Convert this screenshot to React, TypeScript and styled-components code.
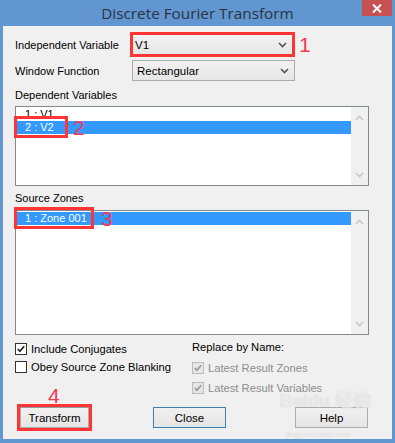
import React, { FC } from 'react'
import styled, { createGlobalStyle } from 'styled-components'

const GlobalStyle = createGlobalStyle`
  html, body {
    margin: 0;
    padding: 0;
    background: #ffffff;
  }
`

const Window = styled.div`
  position: relative;
  width: 395px;
  height: 443px;
  background: #6196d0;
  display: flex;
  flex-direction: column;
  font-family: 'Liberation Sans', Arial, sans-serif;
  font-size: 11px;
  color: #000;
  overflow: hidden;
`

const TitleBar = styled.div`
  height: 26px;
  flex: none;
  display: grid;
  grid-template-columns: 1fr auto 1fr;
  align-items: start;
`

const Title = styled.div`
  grid-column: 2;
  font-family: 'Open Sans', 'Noto Sans', sans-serif;
  font-size: 15.3px;
  line-height: 26px;
  color: #2b3340;
`

const CloseBox = styled.div`
  grid-column: 3;
  justify-self: end;
  margin-right: 3px;
  width: 30px;
  height: 16px;
  background: #c75050;
  display: flex;
  align-items: center;
  justify-content: center;
`

const Client = styled.div`
  flex: 1;
  margin: 0 3px 4px 3px;
  background: #f0f0f0;
  padding: 6px 12px 0 12px;
  display: flex;
  flex-direction: column;
`

const FieldRow = styled.div<{ $top?: number }>`
  display: flex;
  align-items: center;
  margin-top: ${({ $top }) => $top ?? 0}px;
  height: ${({ $top }) => ($top ? 21 : 25)}px;
`

const FieldLabel = styled.div`
  width: 115px;
  flex: none;
`

const Combo = styled.div<{ $marked?: boolean }>`
  box-sizing: border-box;
  width: ${({ $marked }) => ($marked ? 165 : 163)}px;
  height: ${({ $marked }) => ($marked ? 25 : 21)}px;
  margin-left: ${({ $marked }) => ($marked ? 0 : 2)}px;
  border: ${({ $marked }) => ($marked ? '3px solid #ff3434' : '1px solid #acacac')};
  background: linear-gradient(#f2f2f2, #e6e6e6);
  display: flex;
  align-items: center;
  justify-content: space-between;
  padding: 0 5px 0 ${({ $marked }) => ($marked ? 2 : 4)}px;
  font-size: 11.5px;
`

const Mark = styled.span`
  font-family: 'Liberation Sans', Arial, sans-serif;
  font-size: 21px;
  line-height: 1;
  color: #f23a52;
`

const SectionLabel = styled.div<{ $top: number }>`
  margin-top: ${({ $top }) => $top}px;
  line-height: 13px;
`

const ListBox = styled.div<{ $height: number; $top: number }>`
  box-sizing: border-box;
  margin-top: ${({ $top }) => $top}px;
  width: 354px;
  height: ${({ $height }) => $height}px;
  border: 1px solid #828790;
  background: #fff;
  display: flex;
`

const ListItems = styled.div`
  flex: 1;
  padding-top: 1px;
  display: flex;
  flex-direction: column;
`

const ListItem = styled.div<{ $selected?: boolean }>`
  position: relative;
  height: 13px;
  line-height: 13px;
  padding-left: 9px;
  background: ${({ $selected }) => ($selected ? '#3399ff' : 'transparent')};
  color: ${({ $selected }) => ($selected ? '#fff' : '#000')};
  font-size: 11px;
`

const ItemMark = styled.div<{ $w: number }>`
  position: absolute;
  left: -2px;
  top: -5px;
  width: ${({ $w }) => $w}px;
  height: 22px;
  box-sizing: border-box;
  border: 3px solid #ff3434;
`

const ItemNumber = styled(Mark)<{ $left: number }>`
  position: absolute;
  left: ${({ $left }) => $left}px;
  top: -4px;
`

const ScrollBar = styled.div`
  width: 17px;
  background: #f0f0f0;
  display: flex;
  flex-direction: column;
  justify-content: space-between;
  align-items: center;
  padding: 8px 0 7px;
  box-sizing: border-box;
`

const Options = styled.div`
  margin-top: 7px;
  display: grid;
  grid-template-columns: 177px 1fr;
`

const OptionColumn = styled.div<{ $gap: number }>`
  display: flex;
  flex-direction: column;
  gap: ${({ $gap }) => $gap}px;
`

const CheckRow = styled.label<{ $disabled?: boolean }>`
  display: flex;
  align-items: center;
  gap: 4px;
  height: 13px;
  font-size: 11.2px;
  color: ${({ $disabled }) => ($disabled ? '#8d8d8d' : '#000')};
`

const Box = styled.span<{ $disabled?: boolean }>`
  box-sizing: border-box;
  width: 12px;
  height: 12px;
  flex: none;
  border: 1px solid ${({ $disabled }) => ($disabled ? '#bcbcbc' : '#333')};
  background: ${({ $disabled }) => ($disabled ? '#e6e6e6' : '#fff')};
  display: flex;
  align-items: center;
  justify-content: center;
`

const PlainText = styled.div`
  height: 13px;
  line-height: 13px;
  font-size: 11.2px;
  margin-top: -1px;
`

const ButtonRow = styled.div`
  margin-top: 10px;
  display: flex;
  align-items: flex-end;
`

const MarkedButton = styled.div`
  position: relative;
  margin-left: 2px;
  box-sizing: border-box;
  width: 75px;
  height: 27px;
  border: 3px solid #ff3434;
  display: flex;
`

const FourMark = styled(Mark)`
  position: absolute;
  left: 28px;
  top: -22px;
`

const Button = styled.div<{ $primary?: boolean; $left: number }>`
  box-sizing: border-box;
  flex: ${({ $left }) => ($left < 0 ? 1 : 'none')};
  width: ${({ $left }) => ($left < 0 ? 'auto' : '73px')};
  height: ${({ $left }) => ($left < 0 ? 'auto' : '21px')};
  margin-left: ${({ $left }) => Math.max($left, 0)}px;
  margin-bottom: ${({ $left }) => ($left < 0 ? 0 : 3)}px;
  border: 1px solid ${({ $primary }) => ($primary ? '#3c7fb1' : '#acacac')};
  border-top-color: ${({ $left }) => ($left < 0 ? '#9a9a9a' : undefined)};
  background: linear-gradient(#f0f0f0, #e5e5e5);
  display: flex;
  align-items: center;
  justify-content: center;
  font-size: 11.5px;
`

const Watermark = styled.div`
  position: absolute;
  left: 280px;
  top: 392px;
  color: rgba(255, 255, 255, 0.6);
  text-shadow: 0 0 1px rgba(120, 120, 120, 0.35);
  font-family: 'Liberation Sans', Arial, 'Noto Sans CJK SC', sans-serif;
  font-weight: bold;
  pointer-events: none;
`

const WaterBig = styled.div`
  font-size: 18px;
  line-height: 19px;
`

const WaterSmall = styled.div`
  font-size: 8px;
  font-weight: normal;
  line-height: 9px;
  margin: 19px 0 0 6px;
`

const Chevron: FC<{ dir: 'up' | 'down'; color: string }> = ({ dir, color }) => (
  <svg width="9" height="6" viewBox="0 0 9 6">
    <path
      d={dir === 'down' ? 'M1 1 L4.5 4.5 L8 1' : 'M1 5 L4.5 1.5 L8 5'}
      fill="none"
      stroke={color}
      strokeWidth="1.6"
    />
  </svg>
)

const Tick: FC<{ color: string }> = ({ color }) => (
  <svg width="10" height="10" viewBox="0 0 11 11">
    <path d="M2 5.5 L4.3 8 L9 2.5" fill="none" stroke={color} strokeWidth="1.9" />
  </svg>
)

const Check: FC<{ label: string; checked?: boolean; disabled?: boolean }> = ({
  label,
  checked,
  disabled,
}) => (
  <CheckRow $disabled={disabled}>
    <Box $disabled={disabled}>{checked && <Tick color={disabled ? '#9a9a9a' : '#222'} />}</Box>
    {label}
  </CheckRow>
)

const Scroll: FC = () => (
  <ScrollBar>
    <Chevron dir="up" color="#c8c8c8" />
    <Chevron dir="down" color="#c8c8c8" />
  </ScrollBar>
)

export default function App() {
  return (
    <>
      <GlobalStyle />
      <Window>
        <TitleBar>
          <Title>Discrete Fourier Transform</Title>
          <CloseBox>
            <svg width="10" height="9" viewBox="0 0 10 9">
              <path d="M1 0.5 L9 8.5 M9 0.5 L1 8.5" stroke="#fff" strokeWidth="2" />
            </svg>
          </CloseBox>
        </TitleBar>
        <Client>
          <FieldRow>
            <FieldLabel>Independent Variable</FieldLabel>
            <Combo $marked>
              V1
              <Chevron dir="down" color="#555" />
            </Combo>
            <Mark style={{ marginLeft: 4 }}>1</Mark>
          </FieldRow>
          <FieldRow $top={3}>
            <FieldLabel>Window Function</FieldLabel>
            <Combo>
              Rectangular
              <Chevron dir="down" color="#555" />
            </Combo>
          </FieldRow>

          <SectionLabel $top={8}>Dependent Variables</SectionLabel>
          <ListBox $top={4} $height={80}>
            <ListItems>
              <ListItem>1 : V1</ListItem>
              <ListItem $selected>
                2 : V2
                <ItemMark $w={54} />
                <ItemNumber $left={57}>2</ItemNumber>
              </ListItem>
            </ListItems>
            <Scroll />
          </ListBox>

          <SectionLabel $top={6}>Source Zones</SectionLabel>
          <ListBox $top={5} $height={125}>
            <ListItems>
              <ListItem $selected>
                1 : Zone 001
                <ItemMark $w={80} />
                <ItemNumber $left={85}>3</ItemNumber>
              </ListItem>
            </ListItems>
            <Scroll />
          </ListBox>

          <Options>
            <OptionColumn $gap={5}>
              <Check label="Include Conjugates" checked />
              <Check label="Obey Source Zone Blanking" />
            </OptionColumn>
            <OptionColumn $gap={7}>
              <PlainText>Replace by Name:</PlainText>
              <Check label="Latest Result Zones" checked disabled />
              <Check label="Latest Result Variables" checked disabled />
            </OptionColumn>
          </Options>

          <ButtonRow>
            <MarkedButton>
              <FourMark>4</FourMark>
              <Button $left={-1}>Transform</Button>
            </MarkedButton>
            <Button $left={61} $primary>
              Close
            </Button>
            <Button $left={69}>Help</Button>
          </ButtonRow>
        </Client>
        <Watermark>
          <WaterBig>Baidu 经验</WaterBig>
          <WaterSmall>jingyan.baidu.com</WaterSmall>
        </Watermark>
      </Window>
    </>
  )
}
